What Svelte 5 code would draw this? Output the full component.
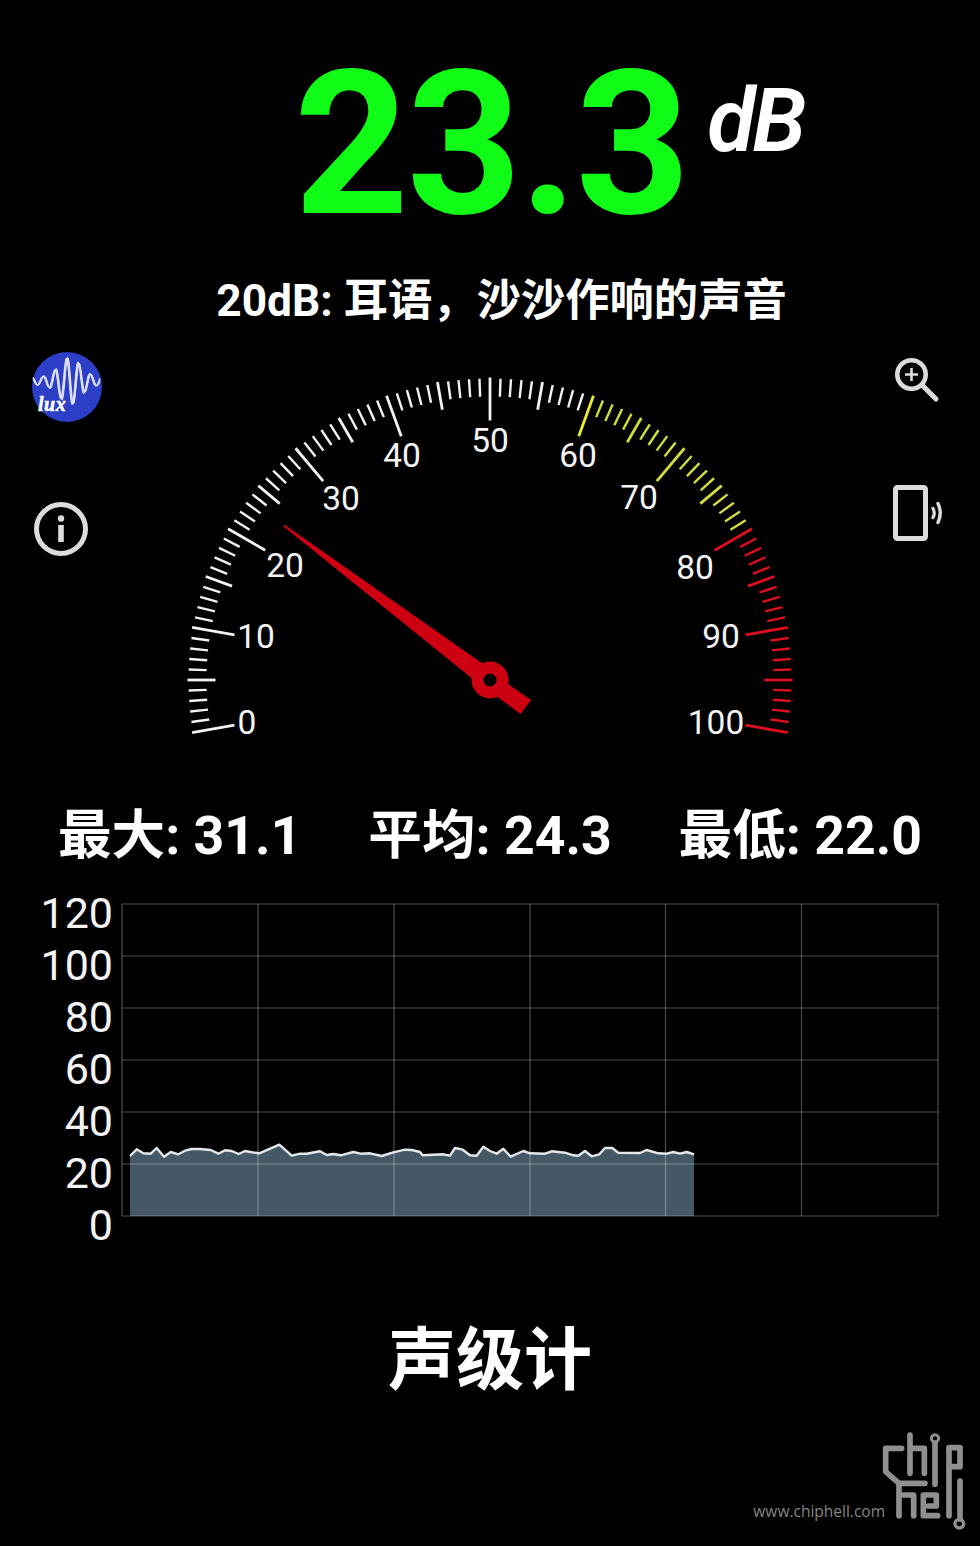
<script>
  const cx = 490, cy = 680;
  const R = 302.5;
  const pol = (v, r) => {
    const a = ((190 - v * 2) * Math.PI) / 180;
    return [cx + r * Math.cos(a), cy - r * Math.sin(a)];
  };
  const tickColor = (v) => {
    if (v >= 80) return '#dd0f1c';
    if (v === 60) return '#ecec30';
    if (v >= 60) return '#d2dc40';
    return '#f2f2f2';
  };
  const ticks = Array.from({ length: 101 }, (_, v) => {
    const len = v % 10 === 0 ? 43 : v % 5 === 0 ? 28 : 18;
    const r0 = v % 5 === 0 ? R : R - 1;
    const [x1, y1] = pol(v, r0);
    const [x2, y2] = pol(v, r0 - len);
    return { x1, y1, x2, y2, c: tickColor(v), w: v % 5 === 0 ? 2.8 : 2.4 };
  });
  const labels = [
    [0, 247, 722], [10, 256, 636], [20, 285, 565], [30, 341, 498], [40, 402, 455],
    [50, 490, 440], [60, 578, 455], [70, 639, 497], [80, 695, 567], [90, 721, 636], [100, 716, 722]
  ];
  const rows = [904, 956, 1008, 1060, 1112, 1164, 1216];
  const cols = [122, 258, 394, 530, 665.5, 801.5, 938];
  const yLabels = [120, 100, 80, 60, 40, 20, 0];
  const z6 = [[30,78],[50,58],[70,70],[92,71],[110,54],[132,80],[152,66],[175,73],[195,62],[215,57],[240,57],[272,60],[295,71],[315,61],[335,63],[356,72],[375,63],[395,67],[418,70],[478,44],[515,77],[540,71],[560,71],[600,64],[620,75],[640,72],[662,76],[700,66],[722,71],[750,70],[785,78],[820,67],[855,59],[875,60]];
  const z7 = [[30,66],[38,76],[100,73],[120,77],[135,54],[158,59],[180,76],[200,77],[220,50],[240,63],[260,71],[280,56],[302,80],[340,63],[360,70],[405,71],[425,64],[465,68],[490,76],[505,77],[525,63],[545,79],[568,73],[585,54],[607,54],[625,68],[690,69],[710,60],[745,70],[770,71],[790,66],[810,71],[830,66],[852,73]];
  const pts = [
    ...z6.map(([x, y]) => [120 + x / 3, 1130 + y / 3]),
    ...z7.map(([x, y]) => [410 + x / 3, 1130 + y / 3])
  ];
  const line = pts.map(([x, y]) => `${x.toFixed(1)},${y.toFixed(1)}`).join(' ');
  const area = `130,1216 ${line} 694,1216`;

  const wave = (shift) => {
    let d = '';
    for (let x = 1; x <= 68; x += 0.5) {
      const env = 20 * Math.exp(-(((x - 38) / 15) ** 2)) + 4;
      const y = 29 - env * Math.cos((2 * Math.PI * (x - 35 - shift)) / 11.8);
      d += `${d ? 'L' : 'M'}${x} ${y.toFixed(2)} `;
    }
    return d;
  };
  const waves = [-0.8, -0.25, 0.25, 0.8];
</script>

<div class="screen">
  <header class="reading">
    <span class="value">23.3</span>
    <span class="unit">dB</span>
  </header>

  <p class="hint">20dB: 耳语，沙沙作响的声音</p>

  <section class="gauge-row">
    <svg class="gauge" viewBox="0 340 980 420" width="980" height="420" aria-label="gauge">
      {#each ticks as t}
        <line x1={t.x1} y1={t.y1} x2={t.x2} y2={t.y2} stroke={t.c} stroke-width={t.w} />
      {/each}
      {#each labels as [v, x, y]}
        <text class="gauge-label" {x} y={y + 12} text-anchor="middle">{v}</text>
      {/each}
      <path d="M283 526 L285 525 L496 673 L484 688 Z M495 675 L531 700 L520.7 714 L484 687 Z" fill="#cc0010" />
      <circle cx={cx} cy={cy} r="18.5" fill="#cc0010" />
      <circle cx={cx} cy={cy} r="6.5" fill="#000" />
    </svg>

    <div class="side left">
      <svg class="lux" viewBox="0 0 70 70" width="70" height="70">
        <circle cx="35" cy="35" r="35" fill="#2c3fc6" />
        {#each waves as s}
          <path d={wave(s)} fill="none" stroke="#e6e9ff" stroke-width="1" />
        {/each}
        <text class="lux-text" x="6" y="59">lux</text>
      </svg>
      <svg class="info" viewBox="0 0 56 56" width="56" height="56">
        <circle cx="28" cy="28" r="24.5" fill="none" stroke="#dcdcdc" stroke-width="5" />
        <rect x="25.2" y="24" width="5.6" height="17" fill="#dcdcdc" />
        <circle cx="28" cy="17.5" r="3.2" fill="#dcdcdc" />
      </svg>
    </div>

    <div class="side right">
      <svg class="zoom" viewBox="0 0 46 46" width="46" height="46">
        <circle cx="17.5" cy="17.5" r="14.2" fill="none" stroke="#dcdcdc" stroke-width="4.6" />
        <path d="M11 17.5 H24 M17.5 11 V24" stroke="#dcdcdc" stroke-width="2.6" />
        <path d="M28 28 L42 42" stroke="#dcdcdc" stroke-width="5" stroke-linecap="round" />
      </svg>
      <svg class="phone" viewBox="0 0 54 58" width="54" height="58">
        <rect x="3.5" y="3.5" width="30" height="51" rx="2" fill="none" stroke="#dcdcdc" stroke-width="5" />
        <path d="M41 24.5 Q43.5 29 41 33.5" fill="none" stroke="#dcdcdc" stroke-width="3.2" stroke-linecap="round" />
        <path d="M46 19.5 Q50.5 29 46 38.5" fill="none" stroke="#dcdcdc" stroke-width="3.4" stroke-linecap="round" />
      </svg>
    </div>
  </section>

  <section class="stats">
    <span>最大: 31.1</span>
    <span>平均: 24.3</span>
    <span>最低: 22.0</span>
  </section>

  <svg class="chart" viewBox="0 880 980 372" width="980" height="372">
    <polygon points={area} fill="#445866" />
    <polyline points={line} fill="none" stroke="#e4e8ea" stroke-width="2.4" stroke-linejoin="round" />
    {#each rows as y}
      <line x1="122" x2="938" y1={y} y2={y} stroke="#fff" stroke-opacity="0.3" stroke-width="1.2" />
    {/each}
    {#each cols as x}
      <line x1={x} x2={x} y1="904" y2="1216" stroke="#fff" stroke-opacity="0.3" stroke-width="1.2" />
    {/each}
    {#each rows as y, i}
      <text class="y-label" x="113" y={y + 24} text-anchor="end">{yLabels[i]}</text>
    {/each}
  </svg>

  <h1 class="title">声级计</h1>

  <div class="watermark">
    <span class="site">www.chiphell.com</span>
    <svg class="logo" viewBox="0 0 300 330" width="100" height="110">
      <g fill="none" stroke="#8f8f8f" stroke-width="17" stroke-linecap="round" stroke-linejoin="round">
        <path d="M80 70 H32 V140 L72 175 H150" />
        <path d="M105 30 V145 M105 70 H148 V145" />
        <path d="M180 54 V178" />
        <path d="M222 272 V68 H255 V125 H222" />
        <path d="M72 175 V272 M72 210 H116 V272" />
        <path d="M188 272 H145 V210 H184 V243 H160" />
        <path d="M255 168 V282" />
        <circle cx="180" cy="40" r="11" stroke-width="9" />
        <circle cx="253" cy="296" r="13" stroke-width="10" />
      </g>
    </svg>
  </div>
</div>

<style>
  :global(body) {
    margin: 0;
    background: #000;
  }
  .screen {
    position: relative;
    width: 980px;
    height: 1546px;
    background: #000;
    overflow: hidden;
    color: #fff;
    font-family: Roboto, 'Noto Sans CJK SC', sans-serif;
  }
  .reading {
    height: 262px;
    display: flex;
    align-items: flex-start;
    padding-left: 294px;
    box-sizing: border-box;
  }
  .value {
    font-size: 200px;
    font-weight: 700;
    line-height: 1;
    letter-spacing: -2px;
    color: #10fb16;
    margin-top: 45px;
  }
  .unit {
    font-size: 88px;
    font-weight: 600;
    font-style: italic;
    line-height: 1;
    letter-spacing: -3px;
    margin-top: 77px;
    margin-left: 19px;
  }
  .hint {
    margin: 0;
    height: 78px;
    line-height: 78px;
    text-align: center;
    font-size: 44.3px;
    font-weight: 700;
    transform: translateX(11.5px);
  }
  .gauge-row {
    position: relative;
    height: 420px;
  }
  .gauge {
    display: block;
  }
  .gauge-label {
    fill: #f4f4f4;
    font-size: 33.5px;
    font-family: Roboto, sans-serif;
  }
  .side {
    position: absolute;
    display: flex;
    flex-direction: column;
  }
  .side.left {
    left: 32px;
    top: 12px;
    gap: 79px;
    align-items: flex-start;
  }
  .info {
    margin-left: 1px;
  }
  .side.right {
    left: 890px;
    top: 17px;
    gap: 81px;
  }
  .zoom {
    margin-left: 4px;
  }
  .phone {
    margin-left: 2px;
  }
  .lux-text {
    fill: #fff;
    stroke: #fff;
    stroke-width: 0.5px;
    letter-spacing: 0.5px;
    font: italic 700 20px 'Liberation Serif', serif;
  }
  .stats {
    height: 120px;
    box-sizing: border-box;
    padding: 38px 58px 0;
    display: flex;
    justify-content: space-between;
    font-size: 53.6px;
    font-weight: 700;
    line-height: 76px;
  }
  .chart {
    display: block;
  }
  .y-label {
    fill: #f4f4f4;
    font-size: 43px;
    font-family: Roboto, sans-serif;
  }
  .title {
    margin: 0;
    padding-top: 59px;
    line-height: 100px;
    text-align: center;
    font-size: 68px;
    font-weight: 700;
  }
  .watermark {
    position: absolute;
    right: 5px;
    bottom: 11px;
    display: flex;
    align-items: flex-end;
  }
  .site {
    font: 15.5px 'Open Sans', sans-serif;
    color: #858585;
    margin: 0 -10px 13px 0;
  }
</style>
